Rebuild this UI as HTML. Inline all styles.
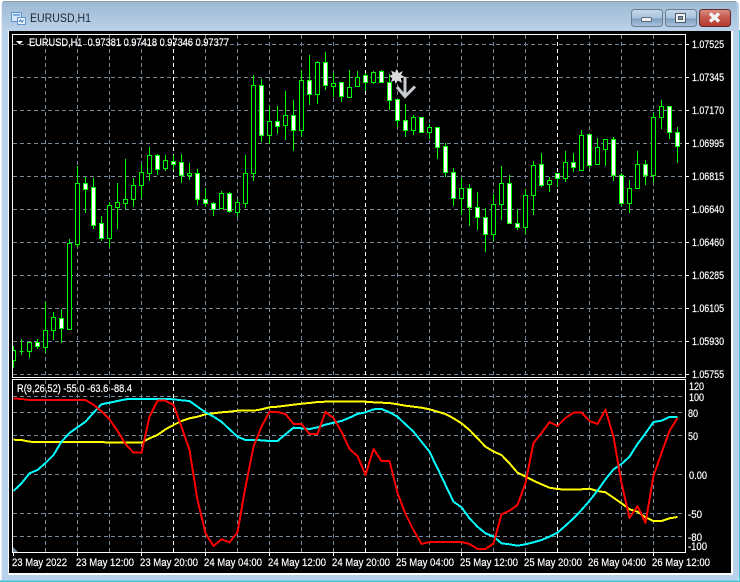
<!DOCTYPE html>
<html><head><meta charset="utf-8"><title>EURUSD,H1</title>
<style>
html,body{margin:0;padding:0;background:#fff;width:740px;height:582px;overflow:hidden}
svg{display:block;position:absolute;left:0;top:0}
text{font-family:"Liberation Sans",sans-serif;font-size:11px;fill:#fff;stroke:#fff;stroke-width:.2}
.t{font-size:12px;fill:#1c2733;stroke:none}
</style></head><body>
<svg width="740" height="582" viewBox="0 0 740 582" xmlns="http://www.w3.org/2000/svg">
<defs>
<linearGradient id="tb" x1="0" y1="0" x2="0" y2="1"><stop offset="0" stop-color="#9db9d4"/><stop offset="1" stop-color="#bcd3ea"/></linearGradient>
<linearGradient id="bb" x1="0" y1="0" x2="0" y2="1"><stop offset="0" stop-color="#c6d8ea"/><stop offset=".5" stop-color="#a9c3dc"/><stop offset=".55" stop-color="#7f9fbf"/><stop offset="1" stop-color="#a8c4de"/></linearGradient>
<linearGradient id="cb" x1="0" y1="0" x2="0" y2="1"><stop offset="0" stop-color="#dc8f83"/><stop offset=".5" stop-color="#c2574a"/><stop offset="1" stop-color="#b5382f"/></linearGradient>
<clipPath id="m"><rect x="13" y="35" width="672" height="342"/></clipPath>
<clipPath id="s"><rect x="13" y="380" width="672" height="172"/></clipPath>
</defs>
<rect width="740" height="582" fill="#fff"/>
<rect x="1" y="1" width="738" height="580" rx="4" fill="#b9d1ea"/>
<rect x="1" y="2" width="736" height="30" rx="3" fill="url(#tb)"/>
<rect x="3" y="1" width="733" height="1" fill="#8a9aa8"/>
<rect x="1" y="3" width="1" height="578" fill="#e8eef5"/>
<rect x="0" y="580" width="740" height="1" fill="#7fcfe0"/>
<rect x="0" y="581" width="740" height="1" fill="#3cc4d0"/>
<rect x="739" y="30" width="1" height="552" fill="#3cc4d0"/>
<rect x="8" y="31" width="725" height="544" fill="#fff"/>
<rect x="9" y="31" width="722" height="542" fill="#000"/>
<!-- title icon -->
<rect x="11.5" y="12.5" width="10" height="9" fill="#d8e8f8" stroke="#5d93d0"/>
<rect x="17.5" y="17.5" width="8" height="7" fill="#e8f2fb" stroke="#5d93d0"/>
<path d="M19 22l1.500-2 1.500 2 1.500-2" fill="none" stroke="#3a78c0"/>
<path d="M13 15h7" stroke="#7fb0e0" stroke-width="2"/>
<text class="t" x="30" y="22" textLength="61" lengthAdjust="spacingAndGlyphs">EURUSD,H1</text>
<!-- window buttons -->
<rect x="631.500" y="9.500" width="31" height="17" rx="3" fill="url(#bb)" stroke="#6b7f93"/>
<rect x="641.500" y="17.500" width="10" height="4" rx="1" fill="#eef0f2" stroke="#5a6a7a"/>
<rect x="665.500" y="9.500" width="31" height="17" rx="3" fill="url(#bb)" stroke="#6b7f93"/>
<rect x="675.500" y="13.500" width="10" height="9" fill="#eef0f2" stroke="#4e5c6a"/>
<rect x="678.500" y="16.500" width="4" height="3" fill="#7f96ac" stroke="#4e5c6a"/>
<rect x="699.500" y="9.500" width="31" height="17" rx="3" fill="url(#cb)" stroke="#5e2a2a"/>
<path d="M710 13.500l9 8M719 13.500l-9 8" stroke="#f4f4f4" stroke-width="3.500"/>
<!-- chart frames -->
<g shape-rendering="crispEdges">
<g fill="none" stroke="#778899" stroke-dasharray="4 3">
<path d="M13 44.500H685M13 77.500H685M13 110.500H685M13 143.500H685M13 176.500H685M13 209.500H685M13 242.500H685M13 275.500H685M13 308.500H685M13 341.500H685M13 374.500H685"/>
<path d="M45.500 35V377M77.500 35V377M109.500 35V377M141.500 35V377M205.500 35V377M237.500 35V377M269.500 35V377M301.500 35V377M333.500 35V377M397.500 35V377M429.500 35V377M461.500 35V377M493.500 35V377M525.500 35V377M589.500 35V377M621.500 35V377M653.500 35V377"/>
<path d="M13 396.500H685M13 412.500H685M13 435.500H685M13 474.500H685M13 513.500H685M13 536.500H685"/>
<path d="M45.500 380V552M77.500 380V552M109.500 380V552M141.500 380V552M205.500 380V552M237.500 380V552M269.500 380V552M301.500 380V552M333.500 380V552M397.500 380V552M429.500 380V552M461.500 380V552M493.500 380V552M525.500 380V552M589.500 380V552M621.500 380V552M653.500 380V552"/>
</g>
<path d="M173.500 35V377M365.500 35V377M557.500 35V377M173.500 380V552M365.500 380V552M557.500 380V552" fill="none" stroke="#fff" stroke-dasharray="4 3"/>
<g clip-path="url(#m)">
<path fill="none" stroke="#0f0" d="M13.500 346V368M21.500 339V355M29.500 342V358M37.500 339V349M45.500 302V353M53.500 312V340M61.500 309V343M69.500 239V329M77.500 166V247M85.500 177V213M93.500 178V229M101.500 216V241M109.500 202V247M117.500 183V229M125.500 159V209M133.500 178V207M141.500 164V198M149.500 147V181M157.500 154V175M165.500 155V171M173.500 155V170M181.500 154V183M189.500 163V180M197.500 169V205M205.500 188V207M213.500 202V216M221.500 191V209M229.500 192V213M237.500 199V217M245.500 155V208M253.500 75V181M261.500 79V142M269.500 106V144M277.500 106V134M285.500 91V140M293.500 100V151M301.500 70V137M309.500 55V105M317.500 61V104M325.500 52V90M333.500 73V97M341.500 82V102M349.500 70V98M357.500 71V87M365.500 73V91M373.500 71V84M381.500 70V83M389.500 74V110M397.500 99V127M405.500 104V137M413.500 115V135M421.500 117V133M429.500 124V139M437.500 127V159M445.500 143V177M453.500 168V206M461.500 178V215M469.500 184V226M477.500 192V230M485.500 208V252M493.500 194V241M501.500 166V220M509.500 175V224M517.500 209V230M525.500 189V234M533.500 161V215M541.500 153V187M549.500 177V192M557.500 173V187M565.500 151V182M573.500 153V172M581.500 130V171M589.500 134V168M597.500 138V165M605.500 139V166M613.500 137V181M621.500 173V206M629.500 180V213M637.500 151V189M645.500 160V185M653.500 113V182M661.500 100V129M669.500 106V139M677.500 127V163"/>
<path fill="#000" stroke="#0f0" d="M11.500 350.500h4v10h-4zM19.500 351.500h4M27.500 342.500h4v9h-4zM43.500 330.500h4v17h-4zM51.500 317.500h4v13h-4zM67.500 243.500h4v86h-4zM75.500 183.500h4v61h-4zM107.500 205.500h4v33h-4zM115.500 202.500h4v5h-4zM123.500 199.500h4v4h-4zM131.500 185.500h4v14h-4zM139.500 172.500h4v13h-4zM147.500 155.500h4v18h-4zM163.500 160.500h4v8h-4zM187.500 173.500h4v2h-4zM219.500 193.500h4v15h-4zM235.500 202.500h4v10h-4zM243.500 173.500h4v30h-4zM251.500 85.500h4v88h-4zM267.500 121.500h4v14h-4zM283.500 115.500h4v10h-4zM299.500 80.500h4v50h-4zM315.500 62.500h4v32h-4zM331.500 83.500h4v3h-4zM347.500 87.500h4v10h-4zM355.500 77.500h4v9h-4zM371.500 72.500h4v10h-4zM411.500 117.500h4v13h-4zM427.500 127.500h4v5h-4zM459.500 188.500h4v10h-4zM491.500 204.500h4v30h-4zM499.500 183.500h4v21h-4zM523.500 195.500h4v32h-4zM531.500 165.500h4v30h-4zM547.500 180.500h4v4h-4zM563.500 162.500h4v16h-4zM579.500 135.500h4v35h-4zM595.500 147.500h4v17h-4zM603.500 139.500h4v10h-4zM627.500 188.500h4v15h-4zM635.500 164.500h4v24h-4zM651.500 117.500h4v58h-4zM659.500 106.500h4v11h-4z"/>
<path fill="#fff" stroke="#0f0" d="M35.500 342.500h4v4h-4zM59.500 318.500h4v10h-4zM83.500 183.500h4v6h-4zM91.500 187.500h4v38h-4zM99.500 223.500h4v15h-4zM155.500 155.500h4v14h-4zM171.500 161.500h4v3h-4zM179.500 162.500h4v13h-4zM195.500 173.500h4v26h-4zM203.500 199.500h4v4h-4zM211.500 203.500h4v6h-4zM227.500 193.500h4v18h-4zM259.500 85.500h4v50h-4zM275.500 121.500h4v5h-4zM291.500 115.500h4v15h-4zM307.500 80.500h4v14h-4zM323.500 62.500h4v23h-4zM339.500 82.500h4v14h-4zM363.500 75.500h4v7h-4zM379.500 71.500h4v11h-4zM387.500 82.500h4v18h-4zM395.500 99.500h4v21h-4zM403.500 120.500h4v10h-4zM419.500 117.500h4v15h-4zM435.500 127.500h4v20h-4zM443.500 146.500h4v26h-4zM451.500 172.500h4v26h-4zM467.500 188.500h4v19h-4zM475.500 207.500h4v10h-4zM483.500 217.500h4v17h-4zM507.500 183.500h4v40h-4zM515.500 223.500h4v4h-4zM539.500 164.500h4v21h-4zM555.500 173.500h4v5h-4zM571.500 162.500h4v5h-4zM587.500 134.500h4v31h-4zM611.500 139.500h4v36h-4zM619.500 175.500h4v28h-4zM643.500 164.500h4v11h-4zM667.500 106.500h4v26h-4zM675.500 132.500h4v14h-4z"/>
</g>
<rect x="12.500" y="34.500" width="673" height="343" fill="none" stroke="#fff"/>
<rect x="12.500" y="379.500" width="673" height="173" fill="none" stroke="#fff"/>
<path stroke="#fff" fill="none" d="M686 44.500h3M686 77.500h3M686 110.500h3M686 143.500h3M686 176.500h3M686 209.500h3M686 242.500h3M686 275.500h3M686 308.500h3M686 341.500h3M686 374.500h3M13.500 553v3M77.500 553v3M141.500 553v3M205.500 553v3M269.500 553v3M333.500 553v3M397.500 553v3M461.500 553v3M525.500 553v3M589.500 553v3M653.500 553v3"/>
</g>
<!-- arrow and star -->
<polygon points="396.700,69 398.700,73 403,71 401,75 405,77 400.800,78.300 402,83 397.800,80.500 395.500,84 394.800,80.500 391,82 392.300,78 389,76 392.500,74.500 391,70.500 395,72.500" fill="#dcdcdc"/>
<path d="M405 77V96M397 87l8 9.500 10-10" fill="none" stroke="#c8ccd0" stroke-width="3"/>
<!-- indicator lines -->
<g clip-path="url(#s)" fill="none" stroke-width="2" stroke-linejoin="round" shape-rendering="crispEdges">
<polyline stroke="#ff0" points="13.500,439.700 21.500,440 29.500,441.700 37.500,442 45.500,442 53.500,442 61.500,442 69.500,442 77.500,442 85.500,442 93.500,442 101.500,442 109.500,442.700 117.500,442.700 125.500,442.700 133.500,442.700 141.500,442.700 149.500,438.300 157.500,435 165.500,429.300 173.500,425 181.500,421 189.500,418.300 197.500,416.700 205.500,414.300 213.500,413.300 221.500,412.300 229.500,411.700 237.500,410.700 245.500,410.700 253.500,410.700 261.500,409.300 269.500,407.300 277.500,406.700 285.500,405.700 293.500,404.700 301.500,403.700 309.500,403 317.500,402 325.500,401.700 333.500,401.700 341.500,401.700 349.500,401.700 357.500,401.700 365.500,401.700 373.500,402.300 381.500,402.700 389.500,403 397.500,404.300 405.500,405.700 413.500,406.700 421.500,407.700 429.500,409.300 437.500,411.700 445.500,414 453.500,418.300 461.500,423.300 469.500,430 477.500,438.300 485.500,446.700 493.500,451.500 501.500,455 509.500,463.300 517.500,472.700 525.500,476.700 533.500,480.700 541.500,484.300 549.500,487.700 557.500,489 565.500,489.700 573.500,489.700 581.500,489.300 589.500,488.700 597.500,491 605.500,492.300 613.500,497.700 621.500,503.300 629.500,509.300 637.500,511.700 645.500,517.300 653.500,521 661.500,521 669.500,518.300 677.500,517"/>
<polyline stroke="#0ff" points="13.500,491 21.500,483.300 29.500,473.300 37.500,470 45.500,463 53.500,455 61.500,441.700 69.500,433 77.500,427.300 85.500,421.700 93.500,412.700 101.500,404.300 109.500,402.700 117.500,401 125.500,399.300 133.500,399 141.500,399 149.500,399 157.500,399 165.500,399 173.500,399.300 181.500,400.300 189.500,401 197.500,406.700 205.500,412.300 213.500,416.700 221.500,421.700 229.500,429.300 237.500,436.700 245.500,440 253.500,440 261.500,440.300 269.500,441 277.500,441 285.500,434.300 293.500,427.700 301.500,428.300 309.500,429 317.500,427.300 325.500,424.700 333.500,422.700 341.500,421 349.500,417.700 357.500,414 365.500,412.300 373.500,409.300 381.500,409 389.500,412.300 397.500,416.700 405.500,424.300 413.500,431.700 421.500,441.700 429.500,451.700 437.500,468.300 445.500,485 453.500,501.700 461.500,507.300 469.500,518.300 477.500,526.700 485.500,533.300 493.500,536.500 501.500,543.300 509.500,544.300 517.500,545.700 525.500,544.300 533.500,542.300 541.500,540 549.500,536.700 557.500,532.700 565.500,525.700 573.500,518.300 581.500,510 589.500,500.700 597.500,490.700 605.500,479.300 613.500,469.300 621.500,464 629.500,456.700 637.500,444 645.500,433.300 653.500,422 661.500,420.700 669.500,417 677.500,417"/>
<polyline stroke="#f00" points="13.500,398.300 21.500,399 29.500,400 37.500,400 45.500,400 53.500,400 61.500,400 69.500,400 77.500,400 85.500,400 93.500,404.700 101.500,411.300 109.500,419.300 117.500,431 125.500,444 133.500,452.700 141.500,452.700 149.500,416.700 157.500,400.700 165.500,400.700 173.500,405 181.500,426.700 189.500,450 197.500,500 205.500,533.300 213.500,546 221.500,539.300 229.500,542.300 237.500,532.300 245.500,486.700 253.500,446.700 261.500,426.700 269.500,411.700 277.500,412 285.500,414 293.500,424 301.500,424 309.500,434 317.500,434 325.500,412 333.500,418 341.500,431.700 349.500,449 357.500,456 365.500,475 373.500,449 381.500,461 389.500,461 397.500,493 405.500,514 413.500,530 421.500,544 429.500,542 437.500,542 445.500,542 453.500,542 461.500,542 469.500,544 477.500,549 485.500,549 493.500,543.500 501.500,514.300 509.500,510.700 517.500,505 525.500,483 533.500,443 541.500,433 549.500,422 557.500,426 565.500,418 573.500,412.700 581.500,412.700 589.500,421 597.500,424 605.500,409.700 613.500,436.700 621.500,483 629.500,518 637.500,506 645.500,523 653.500,476 661.500,453 669.500,431 677.500,418"/>
</g>
<polygon points="13,547 18,552 13,552" fill="#778899"/>
<!-- labels -->
<polygon points="16,41 23,41 19.500,44.500" fill="#fff"/>
<text x="29" y="46" textLength="200" lengthAdjust="spacingAndGlyphs" xml:space="preserve">EURUSD,H1  0.97381 0.97418 0.97346 0.97377</text>
<text x="17" y="392" textLength="115" lengthAdjust="spacingAndGlyphs">R(9,26,52) -55.0 -63.6 -88.4</text>
<g>
<text x="692" y="48" textLength="32" lengthAdjust="spacingAndGlyphs">1.07525</text>
<text x="692" y="81" textLength="32" lengthAdjust="spacingAndGlyphs">1.07345</text>
<text x="692" y="114" textLength="32" lengthAdjust="spacingAndGlyphs">1.07170</text>
<text x="692" y="147" textLength="32" lengthAdjust="spacingAndGlyphs">1.06995</text>
<text x="692" y="180" textLength="32" lengthAdjust="spacingAndGlyphs">1.06815</text>
<text x="692" y="213" textLength="32" lengthAdjust="spacingAndGlyphs">1.06640</text>
<text x="692" y="246" textLength="32" lengthAdjust="spacingAndGlyphs">1.06460</text>
<text x="692" y="279" textLength="32" lengthAdjust="spacingAndGlyphs">1.06285</text>
<text x="692" y="312" textLength="32" lengthAdjust="spacingAndGlyphs">1.06105</text>
<text x="692" y="345" textLength="32" lengthAdjust="spacingAndGlyphs">1.05930</text>
<text x="692" y="378" textLength="32" lengthAdjust="spacingAndGlyphs">1.05755</text>
<text x="689" y="390" textLength="15" lengthAdjust="spacingAndGlyphs">120</text>
<text x="689" y="401" textLength="15" lengthAdjust="spacingAndGlyphs">100</text>
<text x="688" y="417" textLength="10" lengthAdjust="spacingAndGlyphs">80</text>
<text x="688" y="440" textLength="10" lengthAdjust="spacingAndGlyphs">50</text>
<text x="689" y="479" textLength="18" lengthAdjust="spacingAndGlyphs">0.00</text>
<text x="688" y="518" textLength="14" lengthAdjust="spacingAndGlyphs">-50</text>
<text x="688" y="541" textLength="14" lengthAdjust="spacingAndGlyphs">-80</text>
<text x="688" y="550" textLength="19" lengthAdjust="spacingAndGlyphs">-100</text>
</g>
<g>
<text x="12" y="566" textLength="55" lengthAdjust="spacingAndGlyphs">23 May 2022</text>
<text x="76" y="566" textLength="58" lengthAdjust="spacingAndGlyphs">23 May 12:00</text>
<text x="140" y="566" textLength="58" lengthAdjust="spacingAndGlyphs">23 May 20:00</text>
<text x="204" y="566" textLength="58" lengthAdjust="spacingAndGlyphs">24 May 04:00</text>
<text x="268" y="566" textLength="58" lengthAdjust="spacingAndGlyphs">24 May 12:00</text>
<text x="332" y="566" textLength="58" lengthAdjust="spacingAndGlyphs">24 May 20:00</text>
<text x="396" y="566" textLength="58" lengthAdjust="spacingAndGlyphs">25 May 04:00</text>
<text x="460" y="566" textLength="58" lengthAdjust="spacingAndGlyphs">25 May 12:00</text>
<text x="524" y="566" textLength="58" lengthAdjust="spacingAndGlyphs">25 May 20:00</text>
<text x="588" y="566" textLength="58" lengthAdjust="spacingAndGlyphs">26 May 04:00</text>
<text x="652" y="566" textLength="58" lengthAdjust="spacingAndGlyphs">26 May 12:00</text>
</g>
</svg>
</body></html>
